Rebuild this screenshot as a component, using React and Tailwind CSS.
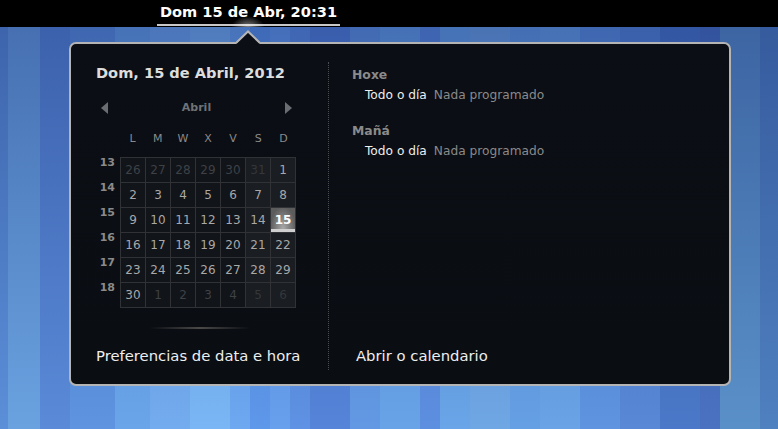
import React from "react";

const stripes = [
  [8, "#5b8fd8"], [32, "#6aa2e0"], [30, "#5a8ad8"], [45, "#5e94e0"], [35, "#6aa5ea"],
  [40, "#74acf0"], [40, "#7ab6f5"], [20, "#6da8f0"], [20, "#5e98ea"], [20, "#68a0ee"],
  [20, "#5f92e4"], [40, "#5584d8"], [30, "#6399e4"], [40, "#68a3e8"], [20, "#5d8fe0"],
  [30, "#69a5e8"], [40, "#6fa7e4"], [30, "#66a0e4"], [40, "#6aa4e6"], [40, "#5e94e0"],
  [40, "#5888d6"], [40, "#4b78c8"], [20, "#4a72c0"], [40, "#5a90c8"], [18, "#4f80c0"],
];

const Wallpaper = () => {
  let x = 0;
  return (
    <svg width="778" height="402" className="absolute inset-0">
      <defs>
        <linearGradient id="shade" x1="0" y1="0" x2="0" y2="1">
          <stop offset="0" stopColor="#10246a" stopOpacity="0.4" />
          <stop offset="1" stopColor="#10246a" stopOpacity="0" />
        </linearGradient>
      </defs>
      {stripes.map(([w, c], i) => {
        const r = <rect key={i} x={x} y="0" width={w} height="402" fill={c} />;
        x += w;
        return r;
      })}
      <rect x="0" y="0" width="778" height="402" fill="url(#shade)" />
    </svg>
  );
};

const weeks = [
  { n: 13, days: [[26, 0], [27, 0], [28, 0], [29, 0], [30, 0], [31, 0], [1, 1]] },
  { n: 14, days: [[2, 1], [3, 1], [4, 1], [5, 1], [6, 1], [7, 1], [8, 1]] },
  { n: 15, days: [[9, 1], [10, 1], [11, 1], [12, 1], [13, 1], [14, 1], [15, 2]] },
  { n: 16, days: [[16, 1], [17, 1], [18, 1], [19, 1], [20, 1], [21, 1], [22, 1]] },
  { n: 17, days: [[23, 1], [24, 1], [25, 1], [26, 1], [27, 1], [28, 1], [29, 1]] },
  { n: 18, days: [[30, 1], [1, 0], [2, 0], [3, 0], [4, 0], [5, 0], [6, 0]] },
];

const DayCell = ({ day, kind, weekend }) => {
  if (kind === 2) {
    return (
      <div className="h-[25px] border-r border-b border-[#303236] bg-[radial-gradient(ellipse_at_50%_85%,#a8a8a8,#5c5c5c_75%)] shadow-[inset_0_-3px_0_#cfcfcf] flex items-center justify-center text-[12px] font-bold text-white">
        {day}
      </div>
    );
  }
  return (
    <div
      className={
        "h-[25px] border-r border-b border-[#303236] flex items-center justify-center text-[12px] " +
        (weekend ? "bg-[#1a1d22] " : "bg-[#111419] ") +
        (kind === 1 ? "text-[#a8a8a8]" : weekend ? "text-[#34373b]" : "text-[#3e4146]")
      }
    >
      {day}
    </div>
  );
};

const EventDay = ({ title, first }) => (
  <div className={first ? "" : "mt-[20px]"}>
    <div className="h-[16px] leading-[16px] text-[12.4px] font-bold text-[#8a8a8a]">{title}</div>
    <div className="mt-[4px] h-[16px] leading-[16px] text-[12.2px] flex pl-[13px]">
      <span className="text-[#eeeeee]">Todo o día</span>
      <span className="ml-[7px] text-[#8a8a8a]">Nada programado</span>
    </div>
  </div>
);

export default function App() {
  return (
    <div className="relative w-[778px] h-[429px] overflow-hidden bg-black font-['DejaVu_Sans',sans-serif] flex flex-col">
      <div className="h-[27px] bg-black flex relative pl-[157px]">
        <div className="w-[183px] h-[26px] border-b-2 border-[#c8c8c8] flex items-center justify-center text-[14.6px] font-bold text-white whitespace-nowrap">
          Dom 15 de Abr, 20:31
        </div>
        <div className="absolute left-[228px] top-[14px] w-[40px] h-[14px] bg-[radial-gradient(ellipse_at_50%_100%,rgba(255,255,255,0.55),rgba(255,255,255,0)_60%)]" />
      </div>

      <div className="relative flex-1">
        <Wallpaper />

        <div className="absolute left-[69px] top-[15px] w-[662px] h-[344px] rounded-[7px] border-2 border-[#b4b4b4] bg-[linear-gradient(to_bottom,#0b0e14,#0a0d12)] flex">
          {/* left column */}
          <div className="w-[257px] pl-[25px] pt-[20px] pb-[19px] flex flex-col">
            <div className="h-[18px] leading-[18px] text-[14.6px] font-bold text-[#dddddd] whitespace-nowrap">
              Dom, 15 de Abril, 2012
            </div>

            <div className="mt-[18px] ml-[2px] w-[197px] h-[16px] px-[3px] flex items-center justify-between">
              <svg width="8" height="12" viewBox="0 0 8 12">
                <polygon points="7,0 7,12 0,6" fill="#6a6d72" />
              </svg>
              <span className="text-[11px] font-bold text-[#6f7276]">Abril</span>
              <svg width="8" height="12" viewBox="0 0 8 12">
                <polygon points="1,0 1,12 8,6" fill="#6a6d72" />
              </svg>
            </div>

            <div className="mt-[16px] ml-[24px] w-[176px] grid grid-cols-7 h-[14px] text-[11px] leading-[14px] text-[#8a8a8a] text-center">
              {["L", "M", "W", "X", "V", "S", "D"].map((d) => (
                <span key={d}>{d}</span>
              ))}
            </div>

            <div className="mt-[11px] flex">
              <div className="w-[24px] pr-[5px] flex flex-col">
                {weeks.map((w) => (
                  <div key={w.n} className="h-[25px] leading-[12px] text-right text-[11px] font-bold text-[#8a8a8a]">
                    {w.n}
                  </div>
                ))}
              </div>
              <div className="w-[176px] grid grid-cols-7 border-l border-t border-[#303236]">
                {weeks.map((w) =>
                  w.days.map(([d, k], i) => (
                    <DayCell key={w.n + "-" + i} day={d} kind={k} weekend={i >= 5} />
                  ))
                )}
              </div>
            </div>

            <div className="mt-[19px] ml-[54px] w-[100px] h-[2px] bg-[linear-gradient(to_right,rgba(90,90,90,0),#4a4a48,rgba(90,90,90,0))]" />

            <div className="flex-1" />
            <div className="h-[18px] leading-[18px] text-[14.8px] text-[#eeeeee] whitespace-nowrap">
              Preferencias de data e hora
            </div>
          </div>

          {/* divider */}
          <div className="mt-[18px] mb-[14px] w-0 border-l border-dotted border-[#4a4c50]" />

          {/* right column */}
          <div className="flex-1 pl-[23px] pt-[23px] pb-[19px] flex flex-col">
            <EventDay title="Hoxe" first />
            <EventDay title="Mañá" />
            <div className="flex-1" />
            <div className="pl-[4px] h-[18px] leading-[18px] text-[14.8px] text-[#eeeeee]">
              Abrir o calendario
            </div>
          </div>
        </div>

        <svg width="24" height="14" className="absolute left-[236px] top-[3px]">
          <polygon points="0,14 12,2 24,14" fill="#0b0e14" />
          <polyline points="0,13 12,1.5 24,13" fill="none" stroke="#b4b4b4" strokeWidth="2" />
        </svg>
      </div>
    </div>
  );
}
